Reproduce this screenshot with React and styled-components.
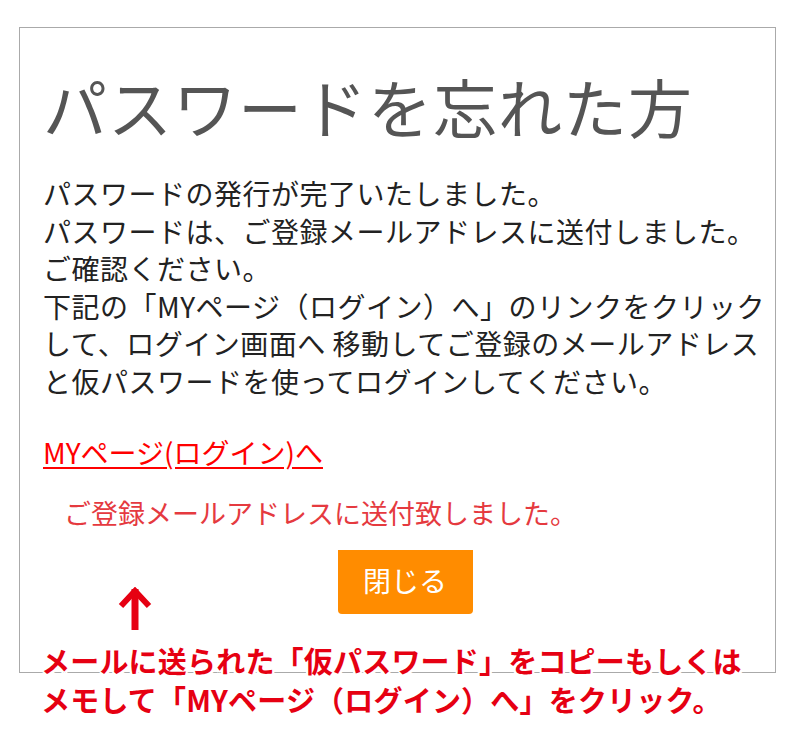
import React from 'react'
import styled, { createGlobalStyle } from 'styled-components'

const GlobalStyle = createGlobalStyle`
    html, body {
        margin: 0;
        padding: 0;
        background: #fff;
    }
    * {
        box-sizing: border-box;
        font-family: "Noto Sans CJK JP", "Noto Sans", sans-serif;
    }
`

const Page = styled.div`
    position: relative;
    width: 800px;
    height: 740px;
    padding: 27px 24px 0 19px;
    overflow: hidden;
`

const Card = styled.div`
    width: 757px;
    height: 646px;
    border: 1px solid #aaa;
    padding: 39px 0 0 23px;
`

const Title = styled.h1`
    margin: 0;
    font-size: 64px;
    line-height: 77px;
    font-weight: 400;
    color: #555;
    letter-spacing: 1px;
`

const Message = styled.p`
    margin: 31px 0 0;
    font-size: 28px;
    line-height: 37.5px;
    color: #222;
    letter-spacing: 0.5px;
    white-space: nowrap;
`

const MyPageLink = styled.a`
    display: inline-block;
    margin-top: 34px;
    font-size: 28px;
    line-height: 37px;
    color: #f00;
    text-decoration: underline;
    text-underline-offset: 3px;
    cursor: pointer;
`

const Notice = styled.p`
    margin: 24px 0 0 21px;
    font-size: 27px;
    line-height: 36px;
    color: #e53a3f;
`

const ButtonRow = styled.div`
    display: flex;
    justify-content: center;
    margin-top: 19px;
    padding-right: 8px;
`

const CloseButton = styled.button`
    width: 135px;
    height: 64px;
    padding: 0 0 4px;
    border: none;
    border-radius: 0 0 4px 4px;
    background: #ff8c00;
    color: #fff;
    font-size: 28px;
    cursor: pointer;
`

const Annotation = styled.div`
    position: absolute;
    left: 41px;
    top: 587px;
    display: flex;
    flex-direction: column;
`

const Arrow = styled.svg`
    margin-left: 77px;
    width: 34px;
    height: 44px;
`

const AnnotationText = styled.p`
    margin: 10px 0 0;
    font-size: 29px;
    line-height: 39px;
    font-weight: 700;
    color: #e60012;
    letter-spacing: 0.2px;
    white-space: nowrap;
    text-shadow: 2px 0 0 #fff, -2px 0 0 #fff, 0 2px 0 #fff, 0 -2px 0 #fff,
        2px 2px 0 #fff, -2px -2px 0 #fff, 2px -2px 0 #fff, -2px 2px 0 #fff;
`

const UpArrow = () => (
    <Arrow viewBox="0 0 34 44">
        <path d="M17 2 L17 43" stroke="#e60012" strokeWidth="7" fill="none" />
        <path d="M3 19 L17 4 L31 19" stroke="#e60012" strokeWidth="6" fill="none" />
    </Arrow>
)

export default function App() {
    return (
        <>
            <GlobalStyle />
            <Page>
                <Card>
                    <Title>パスワードを忘れた方</Title>
                    <Message>
                        パスワードの発行が完了いたしました。<br />
                        パスワードは、ご登録メールアドレスに送付しました。<br />
                        ご確認ください。<br />
                        下記の「MYページ（ログイン）へ」のリンクをクリック<br />
                        して、ログイン画面へ 移動してご登録のメールアドレス<br />
                        と仮パスワードを使ってログインしてください。
                    </Message>
                    <MyPageLink>MYページ(ログイン)へ</MyPageLink>
                    <Notice>ご登録メールアドレスに送付致しました。</Notice>
                    <ButtonRow>
                        <CloseButton>閉じる</CloseButton>
                    </ButtonRow>
                </Card>
                <Annotation>
                    <UpArrow />
                    <AnnotationText>
                        メールに送られた「仮パスワード」をコピーもしくは<br />
                        メモして「MYページ（ログイン）へ」をクリック。
                    </AnnotationText>
                </Annotation>
            </Page>
        </>
    )
}
